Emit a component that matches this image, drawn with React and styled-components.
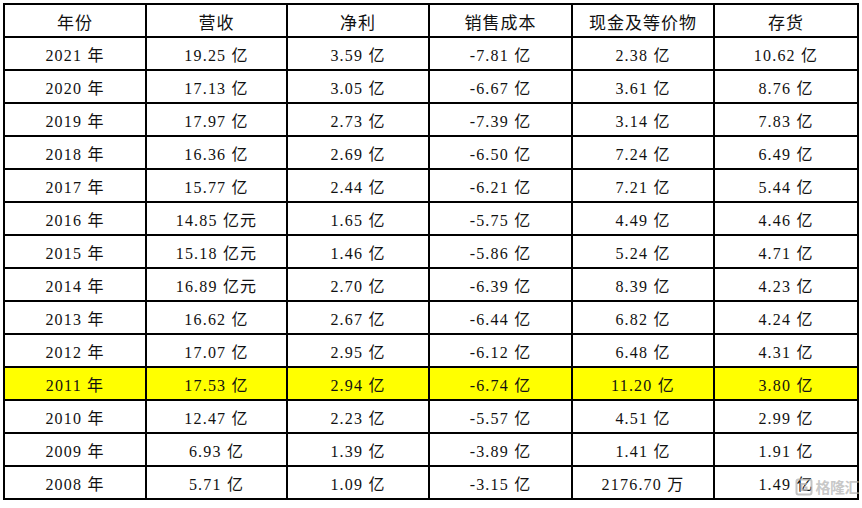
import React from "react";
import styled, { createGlobalStyle } from "styled-components";

const Global = createGlobalStyle`
  html, body { margin: 0; padding: 0; background: #fff; }
  body { padding: 3px; font-family: "Liberation Serif", "Noto Sans CJK SC", serif; }
`;

const Wrap = styled.div`
  position: relative;
  width: 856px;
`;

const Grid = styled.div`
  display: grid;
  grid-template-columns: 140px 139px 140px 141px 140px 142px;
  grid-auto-rows: 31px;
  gap: 2px;
  padding: 2px;
  background: #000;
`;

const Row = styled.div`
  display: contents;
`;

const Cell = styled.div`
  display: flex;
  align-items: center;
  justify-content: center;
  background: ${(p) => (p.$highlight ? "#ffff00" : "#fff")};
  color: #111;
  font-size: 16px;
  letter-spacing: 1.2px;
  white-space: pre;
  padding-top: 1px;
`;

const HeadCell = styled(Cell)`
  font-family: "Noto Sans CJK SC", sans-serif;
  font-size: 17px;
  font-weight: 400;
  letter-spacing: 1px;
`;

const Watermark = styled.div`
  position: absolute;
  right: 0px;
  bottom: 3px;
  display: flex;
  align-items: center;
  gap: 2px;
  color: rgba(175, 175, 175, 0.7);
  font-family: "Noto Sans CJK SC", sans-serif;
  font-size: 15px;
  font-weight: 700;
  letter-spacing: -0.5px;
  pointer-events: none;
`;

const headers = ["年份", "营收", "净利", "销售成本", "现金及等价物", "存货"];

const data = [
  ["2021 年", "19.25 亿", "3.59 亿", "-7.81 亿", "2.38 亿", "10.62 亿"],
  ["2020 年", "17.13 亿", "3.05 亿", "-6.67 亿", "3.61 亿", "8.76 亿"],
  ["2019 年", "17.97 亿", "2.73 亿", "-7.39 亿", "3.14 亿", "7.83 亿"],
  ["2018 年", "16.36 亿", "2.69 亿", "-6.50 亿", "7.24 亿", "6.49 亿"],
  ["2017 年", "15.77 亿", "2.44 亿", "-6.21 亿", "7.21 亿", "5.44 亿"],
  ["2016 年", "14.85 亿元", "1.65 亿", "-5.75 亿", "4.49 亿", "4.46 亿"],
  ["2015 年", "15.18 亿元", "1.46 亿", "-5.86 亿", "5.24 亿", "4.71 亿"],
  ["2014 年", "16.89 亿元", "2.70 亿", "-6.39 亿", "8.39 亿", "4.23 亿"],
  ["2013 年", "16.62 亿", "2.67 亿", "-6.44 亿", "6.82 亿", "4.24 亿"],
  ["2012 年", "17.07 亿", "2.95 亿", "-6.12 亿", "6.48 亿", "4.31 亿"],
  ["2011 年", "17.53 亿", "2.94 亿", "-6.74 亿", "11.20 亿", "3.80 亿"],
  ["2010 年", "12.47 亿", "2.23 亿", "-5.57 亿", "4.51 亿", "2.99 亿"],
  ["2009 年", "6.93 亿", "1.39 亿", "-3.89 亿", "1.41 亿", "1.91 亿"],
  ["2008 年", "5.71 亿", "1.09 亿", "-3.15 亿", "2176.70 万", "1.49 亿"],
];

function Logo() {
  return (
    <svg width="18" height="18" viewBox="0 0 18 18">
      <rect x="1.5" y="1.5" width="15" height="15" rx="2" fill="none" stroke="rgba(175,175,175,0.75)" strokeWidth="2" />
      <path d="M12 6 H6.5 V12 H11.5 V9.5 H9" fill="none" stroke="rgba(175,175,175,0.75)" strokeWidth="2" />
    </svg>
  );
}

export default function App() {
  return (
    <>
      <Global />
      <Wrap>
        <Grid>
          <Row>
            {headers.map((h) => (
              <HeadCell key={h}>{h}</HeadCell>
            ))}
          </Row>
          {data.map((r) => (
            <Row key={r[0]}>
              {r.map((c, i) => (
                <Cell key={i} $highlight={r[0] === "2011 年"}>
                  {c}
                </Cell>
              ))}
            </Row>
          ))}
        </Grid>
        <Watermark>
          <Logo />
          <span>格隆汇</span>
        </Watermark>
      </Wrap>
    </>
  );
}
